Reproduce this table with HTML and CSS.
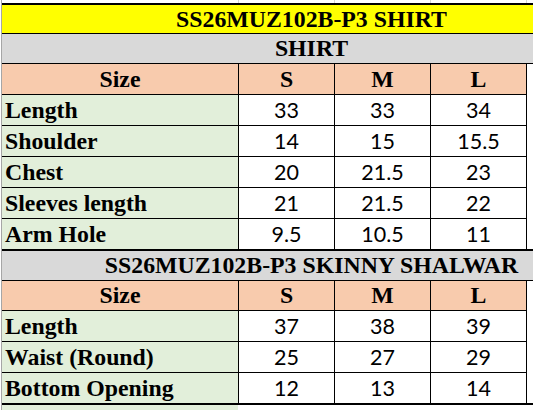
FILE: index.html
```html
<!DOCTYPE html>
<html>
<head>
<meta charset="utf-8">
<link rel="stylesheet" href="styles.css">
</head>
<body>
<div class="sheet">
  <div class="row gridtop"><span></span><span></span><span></span><span></span></div>
  <div class="title yellow">SS26MUZ102B-P3 SHIRT</div>
  <div class="title gray">SHIRT</div>
  <div class="row head"><span class="c lab">Size</span><span class="c">S</span><span class="c">M</span><span class="c">L</span></div>
  <div class="row"><span class="lab">Length</span><span class="n">33</span><span class="n">33</span><span class="n">34</span></div>
  <div class="row"><span class="lab">Shoulder</span><span class="n">14</span><span class="n">15</span><span class="n">15.5</span></div>
  <div class="row"><span class="lab">Chest</span><span class="n">20</span><span class="n">21.5</span><span class="n">23</span></div>
  <div class="row"><span class="lab">Sleeves length</span><span class="n">21</span><span class="n">21.5</span><span class="n">22</span></div>
  <div class="row last"><span class="lab">Arm Hole</span><span class="n">9.5</span><span class="n">10.5</span><span class="n">11</span></div>
  <div class="title gray thick">SS26MUZ102B-P3 SKINNY SHALWAR</div>
  <div class="row head short"><span class="c lab">Size</span><span class="c">S</span><span class="c">M</span><span class="c">L</span></div>
  <div class="row"><span class="lab">Length</span><span class="n">37</span><span class="n">38</span><span class="n">39</span></div>
  <div class="row"><span class="lab">Waist (Round)</span><span class="n">25</span><span class="n">27</span><span class="n">29</span></div>
  <div class="row last"><span class="lab">Bottom Opening</span><span class="n">12</span><span class="n">13</span><span class="n">14</span></div>
  <div class="rule"></div>
  <div class="filler"></div>
</div>
</body>
</html>
```
FILE: styles.css
```css
html, body {
  margin: 0;
  padding: 0;
  background: #ffffff;
}
.sheet {
  margin-left: 1px;
  border-left: 1px solid #a6a6a6;
  width: 531px;
  height: 410px;
  overflow: hidden;
  font-family: "Liberation Serif", "Times New Roman", serif;
  font-weight: bold;
  font-size: 23.8px;
  color: #000;
}
.row {
  display: grid;
  grid-template-columns: 236px 95px 95px 95px;
  column-gap: 1px;
  width: 524px;
  padding-right: 1px;
  background: #000;
  border-bottom: 1px solid #000;
  height: 30px;
}
.row.last {
  border-bottom: none;
}
.row > span {
  background: #ffffff;
  line-height: 30px;
  white-space: nowrap;
}
.row > .lab {
  background: #e2efda;
  padding-left: 3px;
}
.row > .n {
  text-align: center;
  font-family: Lato, "Liberation Sans", sans-serif;
  font-weight: normal;
  font-size: 21.5px;
}
.row.head > span {
  background: #f8cbad;
  text-align: center;
  padding-left: 0;
}
.row.short {
  height: 29px;
}
.row.short > span {
  line-height: 29px;
}
.row.gridtop {
  height: 3px;
  background: #d4d4d4;
  border-bottom: none;
}
.row.gridtop > span {
  line-height: 3px;
}
.title {
  text-align: center;
  padding-left: 88px;
  white-space: nowrap;
  border-bottom: 1px solid #000;
}
.yellow {
  background: #ffff00;
  border-top: 2px solid #000;
  height: 28px;
  line-height: 28px;
}
.gray {
  background: #d9d9d9;
  height: 29px;
  line-height: 29px;
}
.gray.thick {
  border-top: 2px solid #000;
}
.rule {
  height: 2px;
  background: #000;
}
.filler {
  width: 236px;
  height: 10px;
  background: #e2efda;
}
```
